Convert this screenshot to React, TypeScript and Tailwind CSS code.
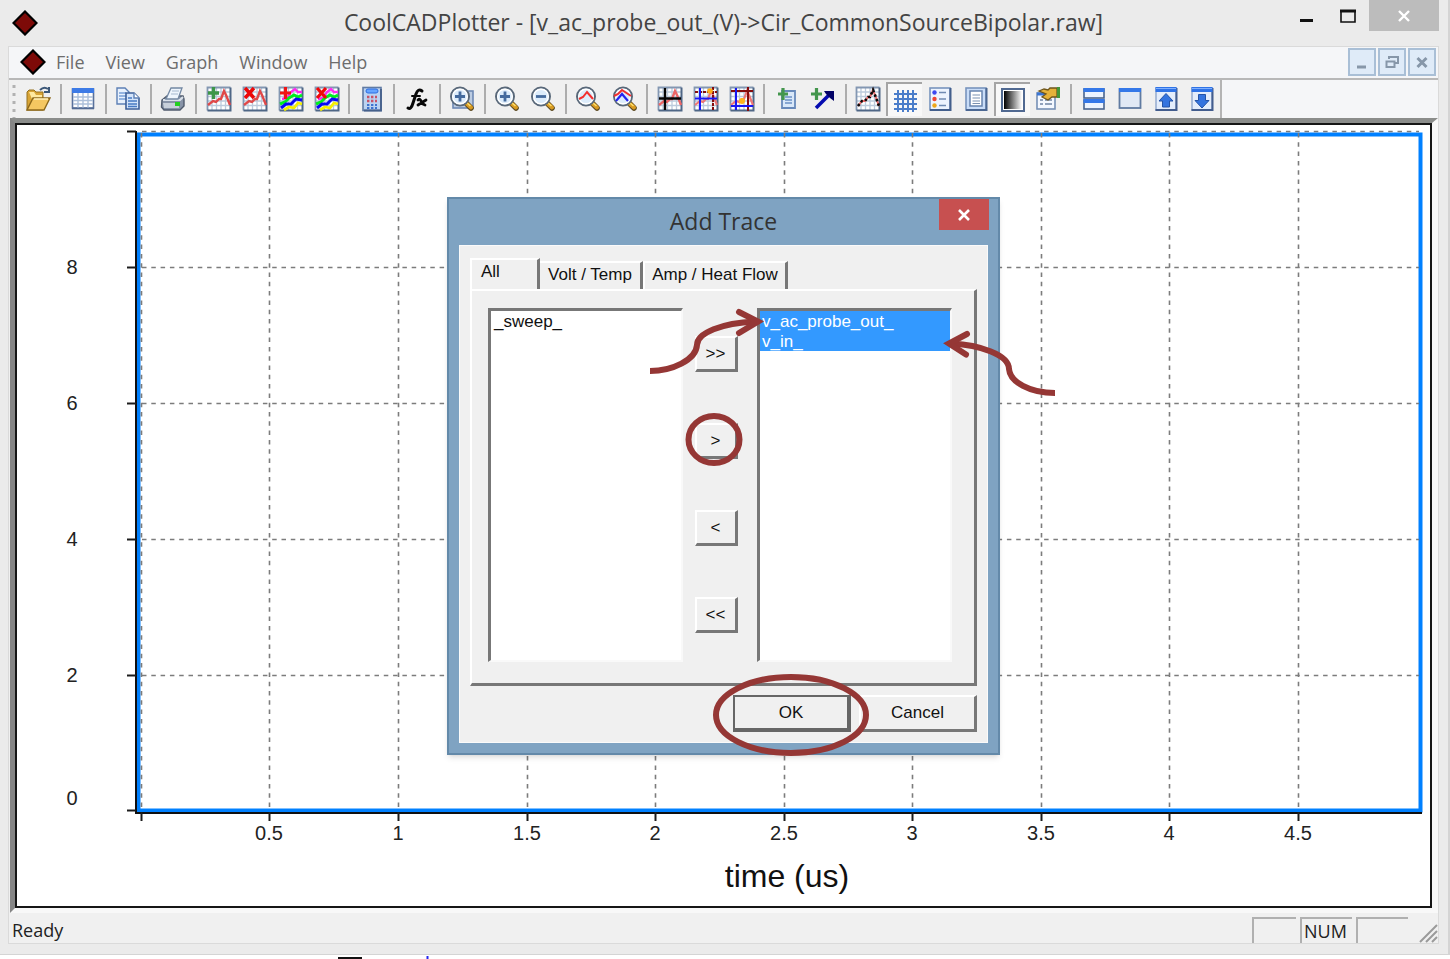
import React from "react";

type IconProps = { children: React.ReactNode };

function Icon({ children }: IconProps) {
  return (
    <svg viewBox="0 0 26 26" className="size-[26px] shrink-0" aria-hidden="true">
      {children}
    </svg>
  );
}

function Diamond() {
  return (
    <svg viewBox="0 0 26 26" className="size-[26px] shrink-0" aria-hidden="true">
      <path d="M13 1.5 24.5 13 13 24.5 1.5 13Z" fill="#7d0a08" stroke="#000" strokeWidth="2.2" />
    </svg>
  );
}

function Sheet() {
  return (
    <g>
      <rect x="1.5" y="1.5" width="23" height="23" fill="#fff" />
      <path d="M6 2V24M10.5 2V24M15 2V24M19.5 2V24M2 6H24M2 10.5H24M2 15H24M2 19.5H24" stroke="#bccbdc" strokeWidth="1.3" />
      <path d="M1.5 24.5V1.5H24.5" fill="none" stroke="#8397b2" strokeWidth="1.8" />
      <path d="M1.5 24.5H24.5V1.5" fill="none" stroke="#4f6786" strokeWidth="2" />
    </g>
  );
}

const traceLine = "M2 19 7 15 10 16 13 13 15 13 18 5 20 9 24 19";

function Rainbow() {
  return (
    <g fill="none" strokeWidth="2.4">
      <path d="M4 13 9 12 13 6 17 3 20 6 24 6" stroke="#ff28f0" />
      <path d="M2 18 7 16 11 12 16 9 20 11 24 9" stroke="#00ee20" strokeWidth="3" />
      <path d="M3 22 8 18 13 18 18 13 24 14" stroke="#0808f5" strokeWidth="3" />
      <path d="M6 24 11 21 16 22 20 17 24 18" stroke="#f4ee00" strokeWidth="2.8" />
    </g>
  );
}

const plus = "M2 7H13M7.5 1V13";
const cross = "M3 2 12 12M12 2 3 12";

function Lens({ children }: IconProps) {
  return (
    <g>
      <path d="M17 17 22 22" stroke="#5d4a20" strokeWidth="5.6" strokeLinecap="round" />
      <path d="M17 17 22 21.5" stroke="#d99b22" strokeWidth="4" strokeLinecap="round" />
      <path d="M18 17 21.5 20" stroke="#ffe06a" strokeWidth="1.5" />
      <circle cx="11" cy="10.5" r="9" fill="#dcecfb" stroke="#596879" strokeWidth="2" />
      <circle cx="11" cy="10.5" r="7.3" fill="none" stroke="#fff" strokeWidth="1.4" />
      {children}
    </g>
  );
}

function MiniWindow({ children }: { children?: React.ReactNode }) {
  return (
    <g>
      <rect x="3" y="2" width="20" height="22" fill="#e4edfb" stroke="#8ea6cc" strokeWidth="1.4" />
      <path d="M2.5 24H23.5V2" fill="none" stroke="#435d8d" strokeWidth="2" />
      <rect x="2.5" y="1" width="21" height="5" fill="#2f73e6" />
      <path d="M3 2.5H23" stroke="#80b0ff" />
      {children}
    </g>
  );
}

type Tool = { name: string; icon: React.ReactNode; pressed?: boolean };

const toolGroups: Tool[][] = [
  [{ name: "Open", icon: (
    <g>
      <path d="M2 24V6L4 4H9L11 6H18V24Z" fill="#d9a536" stroke="#94701f" />
      <path d="M4 6H9L11 9H17V13H7Z" fill="#ffe9a0" />
      <path d="M2 24 8 12H25L19 24Z" fill="#f5c761" stroke="#8d681b" strokeWidth="1.4" />
      <path d="M9 13H23" stroke="#fff0ba" strokeWidth="1.5" />
      <path d="M15 4Q19 0 23 3M24 1V6H19" fill="none" stroke="#3c5878" strokeWidth="2" />
    </g>
  ) }],
  [{ name: "Data table", icon: (
    <g>
      <rect x="2.5" y="3" width="21" height="19" fill="#fff" stroke="#59719b" strokeWidth="1.6" />
      <rect x="2" y="2" width="22" height="5" fill="#3d7be6" />
      <path d="M8 7V22M13 7V22M18 7V22M3 11H23M3 14.5H23M3 18H23" stroke="#acc0da" strokeWidth="1.4" />
      <path d="M2 22.5H24" stroke="#536b94" strokeWidth="1.6" />
    </g>
  ) }],
  [{ name: "Copy", icon: (
    <g stroke="#5d80b5" strokeWidth="1.4">
      <path d="M2 2H10L14 6V18H2Z" fill="#e8f1fd" />
      <path d="M4 7H11M4 10H11M4 13H11" stroke="#78a0d8" />
      <path d="M11 7H19L24 12V23H11Z" fill="#d4e4fa" stroke="#3c5f99" strokeWidth="1.6" />
      <path d="M19 7V12H24" fill="#fff" />
      <path d="M13 12H17M13 15H22M13 18H22M13 20.5H22" stroke="#4679c3" />
    </g>
  ) }],
  [{ name: "Print", icon: (
    <g>
      <path d="M2 14 7 10H23L24 13V20L20 24H4L1.5 21Z" fill="#8894a8" stroke="#505b6d" strokeWidth="1.4" />
      <path d="M3 14H20L23 11" fill="none" stroke="#dae1ea" strokeWidth="2" />
      <path d="M6 13 11 2H22L18 13Z" fill="#eef5fd" stroke="#7388a3" strokeWidth="1.3" />
      <path d="M12 5H19M11 8H18" stroke="#a6b9cf" />
      <path d="M3 17H19V22H4Z" fill="#c8d0da" />
      <rect x="15" y="16" width="5" height="4" fill="#22cf20" />
    </g>
  ) }],
  [
    { name: "Add trace", icon: <g><Sheet /><path d={traceLine} fill="none" stroke="#e04848" strokeWidth="2.4" /><path d={plus} stroke="#3c9648" strokeWidth="3.4" /></g> },
    { name: "Delete trace", icon: <g><Sheet /><path d={traceLine} fill="none" stroke="#e04848" strokeWidth="2.4" /><path d={cross} stroke="#ec0808" strokeWidth="3.4" /></g> },
    { name: "Add all traces", icon: <g><Sheet /><Rainbow /><path d={plus} stroke="#f01414" strokeWidth="3.2" /></g> },
    { name: "Delete all traces", icon: <g><Sheet /><Rainbow /><path d={cross} stroke="#f00808" strokeWidth="3.2" /></g> },
  ],
  [{ name: "Calculator", icon: (
    <g>
      <rect x="4" y="1.5" width="18" height="23" fill="#bcd3f1" stroke="#607ba4" strokeWidth="1.6" />
      <path d="M5 24.5H22V3" fill="none" stroke="#46618b" strokeWidth="1.8" />
      <rect x="7" y="3" width="12" height="4" rx="2" fill="#66a5ff" stroke="#2c6ce0" />
      <path d="M8 11H18M8 15H18" stroke="#c75268" strokeWidth="2.4" strokeDasharray="2.4 1.6" />
      <path d="M8 19H18M8 22H18" stroke="#3e73ce" strokeWidth="2" strokeDasharray="2.4 1.6" />
    </g>
  ) }],
  [{ name: "Function", icon: (
    <g fill="none" stroke="#080808" strokeLinecap="round">
      <path d="M4 22Q7 24 9 17L12 8Q14 2 18 5" strokeWidth="3" />
      <path d="M8 10H16" strokeWidth="2" />
      <path d="M14 14Q16 12 17 15T21 19M22 14 14 19" strokeWidth="2.8" />
    </g>
  ) }],
  [{ name: "Zoom window", icon: <g><rect x="4" y="5" width="20" height="17" fill="#bccce2" stroke="#6d89b4" strokeWidth="1.6" /><Lens><path d="M6 10.5H16M11 5.5V15.5" stroke="#456b9e" strokeWidth="2.8" /></Lens></g> }],
  [
    { name: "Zoom in", icon: <Lens><path d="M6 10.5H16M11 5.5V15.5" stroke="#456b9e" strokeWidth="2.8" /></Lens> },
    { name: "Zoom out", icon: <Lens><path d="M6 10.5H16" stroke="#456b9e" strokeWidth="2.8" /></Lens> },
  ],
  [
    { name: "Fit trace", icon: <Lens><path d="M4 13 8 11 12 6 18 13" fill="none" stroke="#f22f2f" strokeWidth="2" /></Lens> },
    { name: "Fit all traces", icon: <Lens><path d="M2 10 6 8 10 4 19 10" fill="none" stroke="#f22f2f" strokeWidth="2" /><path d="M4 15 10 8 16 15" fill="none" stroke="#2424f0" strokeWidth="2.2" /></Lens> },
  ],
  [
    { name: "Cursor", icon: <g><Sheet /><path d={traceLine} fill="none" stroke="#ed6666" strokeWidth="2.4" /><path d="M8 2V24M2 12.5H24" stroke="#050505" strokeWidth="2.4" /></g> },
    { name: "Two cursors", icon: <g><Sheet /><path d={traceLine} fill="none" stroke="#ed7777" strokeWidth="2.2" /><path d="M20 1V25M2 6H24" stroke="#850c0c" strokeWidth="2" strokeDasharray="3 1" /><path d="M7 2V24M2 12.5H24" stroke="#1717f4" strokeWidth="2" /><circle cx="17" cy="5" r="2.8" fill="#ffad19" /></g> },
    { name: "Cursor box", icon: <g><Sheet /><path d={traceLine} fill="none" stroke="#ed7777" strokeWidth="2.2" /><path d="M19 1V25M2 5H24" stroke="#850c0c" strokeWidth="2" /><path d="M7 2V24M2 20H24" stroke="#1717f4" strokeWidth="2" /><circle cx="13" cy="15" r="3" fill="#ffb51d" /></g> },
  ],
  [
    { name: "Add note", icon: <g><path d="M8 5H21V22H8Z" fill="#d9e8f9" stroke="#688abb" strokeWidth="1.8" /><path d="M11 11H18M11 14H18M11 17H18" stroke="#6b90c5" strokeWidth="1.4" /><path d="M4 8H14M9 2V14" stroke="#43964d" strokeWidth="3.2" /></g> },
    { name: "Add arrow", icon: <g><path d="M6 22 20 8" stroke="#050bb0" strokeWidth="3.6" /><path d="M14 5H24V15L20 12 16 8Z" fill="#020267" /><path d="M1 8H12M6.5 2V14" stroke="#43964d" strokeWidth="3.2" /></g> },
  ],
  [
    { name: "Show points", icon: <g><Sheet /><path d="M3 20 7 15 10 15 13 11 15 11 18 4 20 9 24 20" fill="none" stroke="#e96767" strokeWidth="2" /><path d="M3 20 7 15 10 15 13 11 15 11 18 4 20 9 24 20" fill="none" stroke="#090909" strokeWidth="2.6" strokeDasharray="2.4 2.4" /></g> },
    { name: "Grid", pressed: true, icon: <path d="M6 3V25M11 3V25M16 3V25M21 3V25M2 7H25M2 12H25M2 17H25M2 22H25" stroke="#4a7dca" strokeWidth="2" /> },
    { name: "Legend", icon: <g><rect x="3" y="2" width="20" height="22" fill="#edf4fe" stroke="#7894bd" strokeWidth="1.6" /><path d="M3 24H23.5V2" fill="none" stroke="#435f8c" strokeWidth="2" /><circle cx="7.5" cy="6.5" r="2.2" fill="#3c49f1" /><circle cx="7.5" cy="13" r="2.2" fill="#ee4635" /><circle cx="7.5" cy="19.5" r="2.2" fill="#eda719" /><path d="M12 6.5H19M12 13H19M12 19.5H19" stroke="#708bb3" strokeWidth="1.5" /></g> },
    { name: "Page", icon: <g><rect x="3" y="2" width="20" height="22" fill="#c9ddf8" stroke="#7894bd" strokeWidth="1.6" /><path d="M3 24H23.5V2" fill="none" stroke="#4b6792" strokeWidth="2" /><rect x="7" y="5" width="12" height="15" fill="#fff" stroke="#6784ae" strokeWidth="1.5" /><path d="M9.5 9H17M9.5 12H17M9.5 15H17M9.5 17.5H17" stroke="#7a91b1" strokeWidth="1.2" /></g> },
    { name: "Background", pressed: true, icon: <g><defs><linearGradient id="shade"><stop offset="0" stopColor="#000" /><stop offset="1" stopColor="#fff" /></linearGradient></defs><rect x="2" y="2" width="22" height="22" fill="#fff" stroke="#506991" strokeWidth="2" /><rect x="4" y="4" width="18" height="18" fill="url(#shade)" /></g> },
    { name: "Properties", icon: <g><rect x="2" y="7" width="18" height="16" fill="#f4f8ff" stroke="#7690b6" strokeWidth="1.6" /><path d="M2 8H20" stroke="#3b75d3" strokeWidth="3" /><path d="M5 14H8M5 18H8M10 14H17M10 18H17" stroke="#7085a6" strokeWidth="1.6" /><path d="M4 5 9 3 13 4 15 2H22V11H17L13 14 7 11 11 8Z" fill="#e5b23a" stroke="#6f561c" strokeWidth="1.3" /><rect x="22" y="1" width="3" height="11" fill="#439639" /></g> },
  ],
  [
    { name: "Tile", icon: <g><rect x="3" y="3" width="20" height="9" fill="#edf4ff" stroke="#49658f" strokeWidth="1.6" /><rect x="3" y="14" width="20" height="9" fill="#edf4ff" stroke="#49658f" strokeWidth="1.6" /><path d="M2.5 4H23.5M2.5 15H23.5" stroke="#3578e8" strokeWidth="4" /></g> },
    { name: "Single window", icon: <g><rect x="2.5" y="3" width="21" height="19" fill="#e1e9f5" stroke="#607ba1" strokeWidth="1.8" /><path d="M2 4H24" stroke="#3578e8" strokeWidth="4" /></g> },
    { name: "Move up", icon: <MiniWindow><path d="M13 7.5 20 15H16.5V21H9.5V15H6Z" fill="#3474df" stroke="#2454a7" /></MiniWindow> },
    { name: "Move down", icon: <MiniWindow><path d="M13 22 20 14.5H16.5V8.5H9.5V14.5H6Z" fill="#3474df" stroke="#2454a7" /></MiniWindow> },
  ],
];

function Toolbar() {
  return (
    <div role="toolbar" aria-label="Plot tools" className="flex h-[38px] bg-[#f5f6f8]">
      <div className="flex w-[1213px] shrink-0 items-center justify-between border-r-2 border-[#b4b4b4] bg-[#f0f0f0]">
        <svg viewBox="0 0 11 38" className="h-[38px] w-[11px] shrink-0" aria-hidden="true">
          <path d="M5 5V38" stroke="#b2b2b2" strokeWidth="3" strokeDasharray="3 5" />
        </svg>
        {toolGroups.map((group, i) => (
          <React.Fragment key={i}>
            {i > 0 && (
              <div className="flex h-[30px] w-[9px] shrink-0 justify-center">
                <div className="w-[2px] bg-[#adadad]" />
              </div>
            )}
            {group.map((tool) => (
              <button
                key={tool.name}
                type="button"
                aria-label={tool.name}
                aria-pressed={tool.pressed}
                className={
                  tool.pressed
                    ? "flex h-[34px] w-9 shrink-0 items-center justify-center border-t-2 border-l-2 border-[#a5a5a5] bg-[#f8f8f8]"
                    : "flex h-[34px] w-9 shrink-0 items-center justify-center"
                }
              >
                <Icon>{tool.icon}</Icon>
              </button>
            ))}
          </React.Fragment>
        ))}
      </div>
    </div>
  );
}

const xTicks = [
  { x: 141, label: "" },
  { x: 269, label: "0.5" },
  { x: 398, label: "1" },
  { x: 527, label: "1.5" },
  { x: 655, label: "2" },
  { x: 784, label: "2.5" },
  { x: 912, label: "3" },
  { x: 1041, label: "3.5" },
  { x: 1169, label: "4" },
  { x: 1298, label: "4.5" },
];

const yTicks = [
  { y: 132, label: "", labelY: 0 },
  { y: 268, label: "8", labelY: 274 },
  { y: 404, label: "6", labelY: 410 },
  { y: 540, label: "4", labelY: 546 },
  { y: 676, label: "2", labelY: 682 },
  { y: 811, label: "0", labelY: 805 },
];

function Chart() {
  return (
    <svg viewBox="17 125 1413 781" className="block h-auto w-full bg-white font-['Liberation_Sans',sans-serif]" role="img" aria-label="Empty plot against time">
      <rect x="138.5" y="134.5" width="1282" height="676" fill="none" stroke="#0080ff" strokeWidth="4" />
      <path d="M136 131V813H1422" fill="none" stroke="#101010" strokeWidth="2" />
      {xTicks.map((t) => (
        <g key={t.x}>
          <path d={`M${t.x + 0.5} 133V809`} stroke="#7c7c7c" strokeWidth="1.6" strokeDasharray="4.5 4.8" />
          <path d={`M${t.x + 0.5} 812V821`} stroke="#1c1c1c" strokeWidth="2" />
          <text x={t.x} y="840" textAnchor="middle" fontSize="20" fill="#222">{t.label}</text>
        </g>
      ))}
      {yTicks.map((t) => (
        <g key={t.y}>
          {t.y < 800 && <path d={`M142 ${t.y - 0.5}H1419`} stroke="#7c7c7c" strokeWidth="1.6" strokeDasharray="4.5 4.8" />}
          <path d={`M127 ${t.y - 0.5}H136`} stroke="#1c1c1c" strokeWidth="2" />
          <text x="72" y={t.labelY} textAnchor="middle" fontSize="20" fill="#222">{t.label}</text>
        </g>
      ))}
      <text x="787" y="887" textAnchor="middle" fontSize="32" fill="#111">time (us)</text>
    </svg>
  );
}

function ListBox({ label, items, selected }: { label: string; items: string[]; selected: boolean }) {
  return (
    <ul
      role="listbox"
      aria-label={label}
      aria-multiselectable="true"
      className="h-[354px] w-[195px] border-t-[3px] border-r-2 border-b-2 border-l-[3px] border-t-[#777] border-r-[#f9f9f9] border-b-[#f9f9f9] border-l-[#777] bg-white leading-5"
    >
      {items.map((item) => (
        <li
          key={item}
          role="option"
          aria-selected={selected}
          className={selected ? "h-5 bg-[#3399ff] pt-px pl-[2px] text-white" : "h-5 pt-px pl-[3px]"}
        >
          {item}
        </li>
      ))}
    </ul>
  );
}

const raised = "border-t-2 border-r-[3px] border-b-[3px] border-l-2 border-t-white border-r-[#777] border-b-[#777] border-l-white";

function AddTraceDialog() {
  return (
    <section
      role="dialog"
      aria-label="Add Trace"
      className="absolute top-[197px] left-[447px] w-[553px] border-2 border-[#6389a9] bg-[#7fa3c2] px-[10px] pb-[10px] font-['Liberation_Sans',sans-serif] text-[17px] text-[#111] shadow-md"
    >
      <header className="grid h-[46px] grid-cols-[49px_1fr_49px] items-start">
        <h2 className="col-start-2 pt-[6px] text-center font-['Open_Sans',sans-serif] text-[23px] leading-8 text-[#333]">Add Trace</h2>
        <button type="button" aria-label="Close" className="flex h-[31px] w-[50px] items-center justify-center bg-[#c75050]">
          <svg viewBox="0 0 14 14" className="size-[14px]" aria-hidden="true">
            <path d="M2 2 12 12M12 2 2 12" stroke="#fff" strokeWidth="2.6" />
          </svg>
        </button>
      </header>
      <div className="border border-[#fafafa] bg-[#f0f0f0] px-[10px] pt-3 pb-[10px]">
        <div role="tablist" className="flex items-end">
          <button type="button" role="tab" aria-selected="true" className="flex h-[31px] w-[70px] items-start border-t-2 border-r-[3px] border-l-2 border-t-white border-r-[#777] border-l-white pt-[2px] pl-[9px] leading-5">
            All
          </button>
          <button type="button" role="tab" aria-selected="false" className="flex h-[28px] w-[103px] items-center justify-center border-t-2 border-r-[3px] border-t-white border-r-[#777] pb-[2px] leading-5">
            Volt / Temp
          </button>
          <button type="button" role="tab" aria-selected="false" className="flex h-[28px] w-[145px] items-center justify-center border-t-2 border-r-[3px] border-l-2 border-t-white border-r-[#777] border-l-white pb-[2px] leading-5">
            Amp / Heat Flow
          </button>
        </div>
        <div role="tabpanel" className={`flex h-[397px] justify-between ${raised} pt-[17px] pr-[22px] pl-[16px]`}>
          <ListBox label="Available traces" items={["_sweep_"]} selected={false} />
          <div className="flex flex-col gap-[51px] pt-[28px] pr-2">
            {[">>", ">", "<", "<<"].map((label) => (
              <button key={label} type="button" className={`h-9 w-[43px] ${raised} text-[17px] leading-7`}>
                {label}
              </button>
            ))}
          </div>
          <ListBox label="Plotted traces" items={["v_ac_probe_out_", "v_in_"]} selected={true} />
        </div>
        <div className="flex justify-end gap-2 pt-[9px]">
          <button type="button" className="h-[37px] w-[118px] border-2 border-r-4 border-b-4 border-[#666] leading-7">OK</button>
          <button type="button" className={`h-[37px] w-[118px] ${raised}`}>Cancel</button>
        </div>
      </div>
      <Annotations />
    </section>
  );
}

/* Hand-drawn style call-outs that lie over the dialog. */
function Annotations() {
  return (
    <svg viewBox="447 197 553 559" className="pointer-events-none absolute -top-[2px] -left-[2px] h-[559px] w-[553px] overflow-visible" aria-hidden="true">
      <g fill="none" stroke="#953735" strokeWidth="6">
        <path d="M650 371C672 371 696 360 697 345C697 333 722 323 755 321.5" />
        <path d="M739 312 758 321.5 739 333" strokeLinecap="round" />
        <path d="M1055 393C1030 393 1010 382 1009 369C1009 354 978 345 952 343.5" />
        <path d="M967 334 949 343.5 966 354.5" strokeLinecap="round" />
        <ellipse cx="714" cy="439.5" rx="25.5" ry="23.5" />
        <ellipse cx="791" cy="715" rx="75" ry="38" />
      </g>
    </svg>
  );
}

const mdiButton = "flex h-7 w-7 items-center justify-center border-2 border-[#a9bfd6] bg-[#dfebf8]";

export default function App() {
  return (
    <main className="relative flex min-h-screen flex-col bg-white font-['Open_Sans',sans-serif]">
      <div className="flex flex-1 flex-col border-r-2 border-b border-[#d4d4d4] bg-[#ebebeb] pr-[9px] pb-[10px] pl-2">
        <header className="grid h-[46px] grid-cols-[1fr_auto_1fr] items-center">
          <div className="pl-1">
            <Diamond />
          </div>
          <h1 className="pb-[2px] text-[23px] leading-8 text-[#444]">CoolCADPlotter - [v_ac_probe_out_(V)-&gt;Cir_CommonSourceBipolar.raw]</h1>
          <div className="flex items-start justify-end self-start">
            <button type="button" aria-label="Minimize" className="flex h-8 w-[42px] items-center justify-center">
              <svg viewBox="0 0 16 16" className="size-4" aria-hidden="true"><path d="M2 12.5H15" stroke="#111" strokeWidth="3" /></svg>
            </button>
            <button type="button" aria-label="Maximize" className="flex h-8 w-[42px] items-center justify-center">
              <svg viewBox="0 0 16 16" className="size-4" aria-hidden="true"><path d="M1 2V14H15V2" fill="none" stroke="#111" strokeWidth="1.6" /><path d="M0 3H16" stroke="#111" strokeWidth="3" /></svg>
            </button>
            <button type="button" aria-label="Close" className="flex h-[31px] w-[70px] items-center justify-center bg-[#bcbcbc]">
              <svg viewBox="0 0 14 14" className="size-[14px]" aria-hidden="true"><path d="M2 2 12 12M12 2 2 12" stroke="#fff" strokeWidth="2.4" /></svg>
            </button>
          </div>
        </header>

        <div className="flex flex-1 flex-col border border-[#dadada] bg-[#f0f0f0]">
          <div className="flex h-[33px] items-center justify-between border-b-2 border-[#b8b8b8] bg-[#f5f6f8] pr-[2px] pb-[2px] pl-[11px]">
            <nav className="flex items-center text-[18px] leading-6 text-[#6d6d6d]">
              <Diamond />
              <div className="flex gap-[21px] pl-[10px]">
                {["File", "View", "Graph", "Window", "Help"].map((item) => (
                  <button key={item} type="button">{item}</button>
                ))}
              </div>
            </nav>
            <div className="flex gap-[2px]">
              <button type="button" aria-label="Minimize plot" className={mdiButton}>
                <svg viewBox="0 0 16 16" className="size-4" aria-hidden="true"><path d="M3 13H12" stroke="#8797a9" strokeWidth="3" /></svg>
              </button>
              <button type="button" aria-label="Restore plot" className={mdiButton}>
                <svg viewBox="0 0 16 16" className="size-4" aria-hidden="true"><path d="M5 5V3H14V9H11" fill="none" stroke="#8797a9" strokeWidth="2" /><path d="M2.5 7.5H10.5V13H2.5Z" fill="none" stroke="#8797a9" strokeWidth="2" /></svg>
              </button>
              <button type="button" aria-label="Close plot" className={mdiButton}>
                <svg viewBox="0 0 16 16" className="size-4" aria-hidden="true"><path d="M3.5 4 12.5 13M12.5 4 3.5 13" stroke="#8797a9" strokeWidth="3" /></svg>
              </button>
            </div>
          </div>

          <Toolbar />

          <div className="ml-px border-t-[5px] border-r-[6px] border-b-[5px] border-l-[5px] border-t-[#8b8d8b] border-r-[#f8f8f8] border-b-[#f8f8f8] border-l-[#858585]">
            <div className="border-2 border-[#161616]">
              <Chart />
            </div>
          </div>

          <footer className="flex flex-1 items-center justify-between pt-[3px] pl-[3px] text-[18px] leading-6 text-[#222]">
            <span>Ready</span>
            <div className="flex h-[26px] items-center gap-1">
              <div className="h-[26px] w-[44px] border-t-2 border-l-2 border-[#b0b0b0]" />
              <div className="h-[26px] w-[52px] border-t-2 border-l-2 border-[#b0b0b0] pl-[2px]">NUM</div>
              <div className="h-[26px] w-[52px] border-t-2 border-l-2 border-[#b0b0b0]" />
              <svg viewBox="0 0 26 26" className="size-[26px]" aria-hidden="true">
                <path d="M8 25 25 8M14 25 25 14M20 25 25 20" stroke="#9a9a9a" strokeWidth="2" />
              </svg>
            </div>
          </footer>
        </div>
      </div>

      <div className="flex h-1 items-end">
        <svg viewBox="0 0 430 4" className="h-1 w-[430px]" aria-hidden="true">
          <path d="M338 3H362" stroke="#111" strokeWidth="2" />
          <path d="M427.5 1V4" stroke="#2424f0" strokeWidth="2" />
        </svg>
      </div>

      <AddTraceDialog />
    </main>
  );
}
